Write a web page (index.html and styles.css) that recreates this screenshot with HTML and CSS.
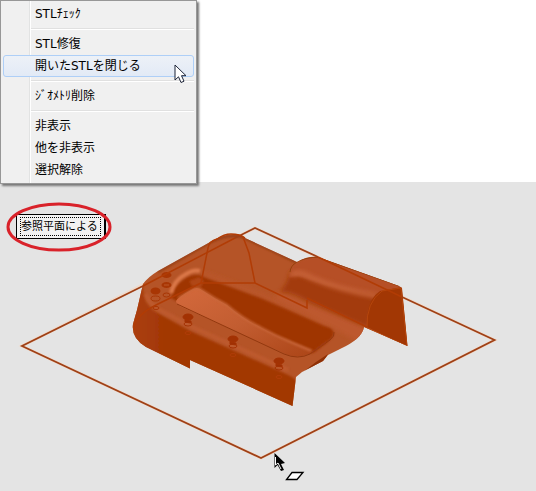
FILE: index.html
```html
<!DOCTYPE html>
<html lang="ja">
<head>
<meta charset="utf-8">
<meta name="viewport" content="width=device-width, initial-scale=1">
<title>STL</title>
<link rel="stylesheet" href="styles.css">
</head>
<body>
<nav class="menu">
  <button class="item" type="button">STLﾁｪｯｸ</button>
  <hr class="separator">
  <button class="item" type="button">STL修復</button>
  <button class="item item-active" type="button">開いたSTLを閉じる</button>
  <hr class="separator">
  <button class="item" type="button">ｼﾞｵﾒﾄﾘ削除</button>
  <hr class="separator">
  <button class="item" type="button">非表示</button>
  <button class="item" type="button">他を非表示</button>
  <button class="item" type="button">選択解除</button>
  <svg class="pointer" viewBox="0 0 14 20" aria-hidden="true">
    <path d="M1 1V16L4.500 12.800L7 18.500L10 17.200L7.500 11.700H12Z" fill="#fff" stroke="#1c2438"/>
  </svg>
</nav>
<main class="scene">
  <svg class="model" viewBox="0 182 536 309" preserveAspectRatio="xMinYMin meet" aria-hidden="true">
    <defs>
      <filter id="soft" x="-20%" y="-20%" width="140%" height="140%"><feGaussianBlur stdDeviation="2"/></filter>
      <filter id="fine" x="-20%" y="-20%" width="140%" height="140%"><feGaussianBlur stdDeviation="1"/></filter>
      <linearGradient id="floor" x1="0" y1="0" x2="1" y2="1">
        <stop offset="0" stop-color="#d4693c"/><stop offset=".5" stop-color="#c25d31"/><stop offset="1" stop-color="#ac4517"/>
      </linearGradient>
      <linearGradient id="side" gradientUnits="userSpaceOnUse" x1="133" y1="0" x2="165" y2="0">
        <stop offset="0" stop-color="#ab3f0c"/><stop offset="1" stop-color="#a23705"/>
      </linearGradient>
      <clipPath id="outline">
        <path d="M143 284L137 310L133 324Q131 338 146 347L190 368.500V360L292.500 406L296 377L302 372L323 361L328 355L340 349Q362 339 364 327L407.500 346L402 288L399 286L318 257Q307 256 297 262L245 238Q241 234 234 234Q224 234 212 241L158 271Q148 277 143 284Z"/>
      </clipPath>
      <g id="boss" fill="none" stroke="#a43203">
        <ellipse cx="0" cy="-2" rx="5" ry="3" fill="#a23203"/>
        <path d="M-3 1L3 2V4L-3 3Z" fill="#9c2f03"/>
        <ellipse cx="0" cy="5" rx="4" ry="2"/>
        <ellipse cx="0" cy="14" rx="3" ry="1.500" stroke="#b03c08"/>
      </g>
    </defs>
    <path d="M255 228L494.500 340L261 458L22 346Z" fill="none" stroke="#f0dacb" stroke-width="3"/>
    <g clip-path="url(#outline)">
      <path d="M125 225H420V415H125Z" fill="#b55427"/>
      <!-- front skirt -->
      <path d="M130 270L143 285Q142 302 154 311L190 331L286 374Q294 377 297 382L294 415L125 380Z" fill="url(#side)" filter="url(#fine)"/>
      <path d="M146 294Q149 304 160 310L190 326L288 370" fill="none" stroke="#be5a2e" stroke-width="4" filter="url(#fine)"/>
      <path d="M158 272L205 245Q225 233 243 237L296 262" fill="none" stroke="#8f3a12" stroke-width="2" filter="url(#fine)"/>
      <path d="M298 376L322 364L328 354L316 362Z" fill="#8e3005"/>
      <!-- recessed tray -->
      <path d="M171 298Q173 286 186 278Q194 273 202 276L262 298L327 326Q337 330 332 338L314 352L195 300L178 302Z" fill="#9f3504" filter="url(#fine)"/>
      <path d="M171 293Q174 280 186 274Q194 269 200 271" fill="none" stroke="#dc7849" stroke-width="4" filter="url(#fine)"/>
      <path d="M203 273L262 295L328 324" fill="none" stroke="#bb572a" stroke-width="4" filter="url(#soft)"/>
      <path d="M189 281L199 277L204 281L201 287L192 286Z" fill="#b04617" filter="url(#fine)"/>
      <path d="M176 301Q178 297 191 290Q197 286 202 290Q214 298 227 305Q242 318 260 327Q276 336 293 343L314 352Q300 359 288 355L184 308Q176 305 176 301Z" fill="url(#floor)"/>
      <path d="M178 298L191 290Q197 286 202 290Q214 298 227 305Q242 318 260 327Q276 336 293 343L312 351" fill="none" stroke="#c9673b" stroke-width="2" filter="url(#fine)"/>
      <path d="M177 304L284 354Q298 360 310 354L330 340Q335 336 334 332" fill="none" stroke="#93390f"/>
      <path d="M311 353L327 341" fill="none" stroke="#a03a0b" stroke-width="2" filter="url(#fine)"/>
      <!-- valley beside the raised arm -->
      <path d="M278 292L368 328L366 346L330 326L275 299Z" fill="#bd592d" filter="url(#soft)"/>
      <path d="M280 292Q288 283 290 272L382 295Q369 304 369 328L307 301Q292 291 280 292Z" fill="#a33b09" filter="url(#soft)"/>
      <!-- raised arm -->
      <path d="M289 278Q290 259 318 256L402 287L384 294Q342 292 303 277Q294 274 289 278Z" fill="#b65025" filter="url(#fine)"/>
      <path d="M292 276Q296 269 312 278Q340 290 377 296" fill="none" stroke="#c66238" stroke-width="5" filter="url(#soft)"/>
      <path d="M290 272Q291 259 317 257L399 286" fill="none" stroke="#96400f"/>
      <path d="M367 327L368 311Q370 298 380 291L402 287L408 347Z" fill="#a23704"/>
      <path d="M367 328Q366 302 382 291L401 288L407 346Z" fill="none" stroke="#b5460d"/>
    </g>
    <g fill="#a83604">
      <use href="#boss" x="188" y="319"/><use href="#boss" x="233" y="341"/><use href="#boss" x="279" y="363"/>
      <ellipse cx="166.500" cy="275" rx="5" ry="3"/>
      <ellipse cx="166.500" cy="285" rx="5" ry="3"/><path d="M164 285H169" stroke="#bd5929"/>
      <ellipse cx="155.500" cy="291" rx="5" ry="3.500"/>
      <g fill="none" stroke="#a83604"><ellipse cx="155.500" cy="298.500" rx="4.500" ry="2.500"/><ellipse cx="166.500" cy="295" rx="3.500" ry="2"/><ellipse cx="156" cy="308" rx="3" ry="1.500"/></g>
    </g>
    <!-- reference plane and construction lines -->
    <path d="M143 286L22 346L261 458L494.500 340L402 297M318 257L255 228L235 238" fill="none" stroke="#9f4016" stroke-width="1.800"/>
    <path d="M217 239Q209 241 208 248L201 283H255L307 308V300M243 237L249 253L255 283M201 283L158 304Q133 316 134 330M245 238Q240 234 231 234Q224 234 217 239M307 298L367 327" fill="none" stroke="#b13c05" stroke-width="1.500"/>
    <path d="M143 286L235 238M318 257L402 297" stroke="#b13c05" stroke-width="1.500"/>
    <!-- plane selection cursor -->
    <path d="M274.500 453V468L277.500 465L281 471L284 470L281 464L285 463Z" fill="#000"/>
    <path d="M275.500 457V465L278 463L281 469" fill="none" stroke="#fff"/>
    <path d="M292 472.500H303L297 479.500H286.500Z" fill="#fff" stroke="#000" stroke-width="1.300"/>
  </svg>
  <button class="plane-button" type="button"><span class="plane-label">参照平面による</span></button>
  <svg class="ring" viewBox="0 0 106 50" aria-hidden="true"><ellipse cx="53" cy="25" rx="51" ry="23" fill="none" stroke="#d9222a" stroke-width="3"/></svg>
</main>
</body>
</html>
```
FILE: styles.css
```css
* {
  box-sizing: border-box;
}

body {
  margin: 0;
  min-height: 100vh;
  display: flex;
  flex-direction: column;
  background: #fff;
  color: #000;
  font-family: "DejaVu Sans", "Noto Sans CJK JP", sans-serif;
  font-size: 12px;
}

.menu {
  position: relative;
  z-index: 1;
  align-self: flex-start;
  display: flex;
  flex-direction: column;
  min-width: 197px;
  padding: 2px;
  border: 1px solid #979797;
  background: linear-gradient(90deg, #f0f0f0 28px, #e2e3e3 28px, #e2e3e3 29px, #fff 29px, #fff 30px, #f0f0f0 30px);
  box-shadow: 2px 2px 2px #777;
}

.item {
  height: 22px;
  padding: 0 31px;
  border: 1px solid transparent;
  border-radius: 3px;
  background: none;
  color: inherit;
  font: inherit;
  line-height: 18px;
  text-align: left;
  white-space: nowrap;
}

.item-active {
  border-color: #aecff7;
  background: linear-gradient(#edf1f7, #e2eaf6);
}

.separator {
  width: auto;
  height: 2px;
  margin: 3px 0 3px 28px;
  border: 0;
  border-top: 1px solid #e0e0e0;
  background: #fff;
}

.pointer {
  position: absolute;
  top: 63px;
  left: 173px;
  width: 14px;
  height: 20px;
}

.scene {
  position: relative;
  flex: 1;
  margin-top: -2px;
  background: #e4e4e4;
}

.model {
  display: block;
  width: 100%;
}

.plane-button {
  position: absolute;
  top: 32px;
  left: 16px;
  padding: 2px 3px;
  border: 1px solid #000;
  border-right-width: 2px;
  background: #f2f2f2;
  color: #000;
  font: inherit;
  font-size: 11px;
}

.plane-label {
  display: block;
  padding: 0 2px 0 0;
  border: 1px dotted #000;
  line-height: 17px;
}

.ring {
  position: absolute;
  top: 20px;
  left: 6px;
  width: 106px;
  height: 50px;
  pointer-events: none;
}
```
